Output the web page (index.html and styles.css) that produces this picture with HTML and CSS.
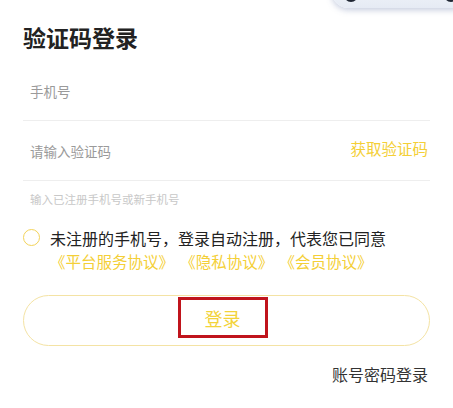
FILE: index.html
```html
<!DOCTYPE html>
<html lang="zh-CN">
<head>
    <meta charset="UTF-8">
    <title>验证码登录</title>
    <link rel="stylesheet" href="styles.css">
</head>
<body>
<div class="capsule"><span class="dot"></span><span class="dot"></span></div>
<div class="page">
    <h1 class="title">验证码登录</h1>
    <div class="field field-phone">
        <span class="placeholder">手机号</span>
    </div>
    <div class="field">
        <span class="placeholder">请输入验证码</span>
        <span class="get-code">获取验证码</span>
    </div>
    <p class="hint">输入已注册手机号或新手机号</p>
    <div class="agree">
        <span class="radio"></span>
        <div class="agree-text">
            未注册的手机号，登录自动注册，代表您已同意<br>
            <span class="link">《平台服务协议》</span><span class="link">《隐私协议》</span><span class="link">《会员协议》</span>
        </div>
    </div>
    <div class="login-btn">
        <span class="login-label">登录</span>
    </div>
    <div class="alt">账号密码登录</div>
</div>
</body>
</html>
```

FILE: styles.css
```css
body {
    margin: 0;
    background: #fff;
    font-family: "Noto Sans CJK SC", "Noto Sans", sans-serif;
    color: #222;
}
.capsule {
    position: absolute;
    left: 332px;
    top: -24px;
    width: 140px;
    height: 32px;
    border-radius: 16px;
    background: linear-gradient(#f6f8fc, #e6ebf4);
    box-shadow: 0 2px 6px rgba(90, 110, 160, 0.35);
}
.capsule .dot {
    position: absolute;
    top: 12px;
    width: 14px;
    height: 14px;
    border-radius: 50%;
    background: #1f2633;
}
.capsule .dot:first-child {
    left: 12px;
}
.capsule .dot:last-child {
    left: 112px;
}
.page {
    padding: 0 23px;
}
.title {
    margin: 22px 0 0;
    font-size: 23px;
    line-height: 30px;
    font-weight: 700;
    color: #222;
}
.field {
    height: 59px;
    padding-left: 7px;
    border-bottom: 1px solid #eeeeee;
    display: flex;
    align-items: center;
    justify-content: space-between;
}
.field-phone {
    height: 69px;
    align-items: flex-end;
    padding-bottom: 20px;
    box-sizing: border-box;
}
.placeholder {
    font-size: 13.5px;
    line-height: 18px;
    color: #9a9a9a;
}
.get-code {
    font-size: 15.5px;
    color: #f4cf36;
    margin-right: 2px;
    margin-top: -6px;
}
.hint {
    margin: 10px 0 0 7px;
    font-size: 11.5px;
    line-height: 16px;
    color: #c8c8c8;
}
.agree {
    margin-top: 20px;
    display: flex;
    align-items: flex-start;
    gap: 10px;
}
.radio {
    flex: 0 0 auto;
    width: 15px;
    height: 15px;
    margin-top: 2px;
    border: 1.5px solid #f3d35a;
    border-radius: 50%;
}
.agree-text {
    font-size: 16px;
    line-height: 23px;
    color: #222;
}
.link {
    color: #f4cf36;
    font-size: 15.5px;
}
.link + .link {
    margin-left: 14px;
}
.login-btn {
    margin-top: 22px;
    height: 49px;
    border: 1px solid #f4e3a4;
    border-radius: 26px;
    display: flex;
    align-items: flex-start;
    justify-content: center;
}
.login-label {
    width: 84px;
    height: 35px;
    margin-top: 1px;
    border: 3px solid #c0141c;
    display: flex;
    align-items: center;
    justify-content: center;
    font-size: 18px;
    color: #f3d33a;
    margin-left: -8px;
}
.alt {
    margin-top: 16px;
    text-align: right;
    padding-right: 2px;
    font-size: 16px;
    color: #333;
}
```
